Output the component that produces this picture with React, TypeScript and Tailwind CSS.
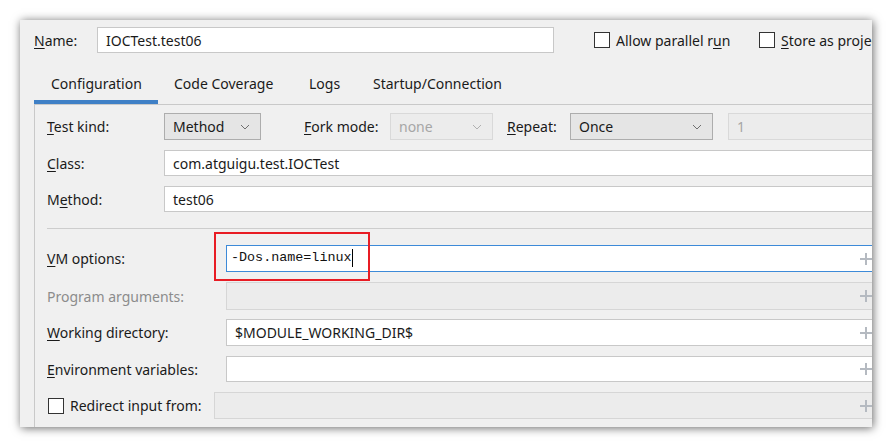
import type { ReactNode } from 'react';

const UI_FONT = "font-['Noto_Sans',sans-serif]";

function Chevron({ muted = false }: { muted?: boolean }) {
  return (
    <svg width="10" height="6" viewBox="0 0 10 6" className="shrink-0">
      <path d="M1 1l4 4 4-4" fill="none" stroke={muted ? '#b0b0b0' : '#6f6f6f'} strokeWidth="1" />
    </svg>
  );
}

function Plus() {
  return (
    <svg width="12" height="12" viewBox="0 0 12 12" className="shrink-0">
      <path d="M6 0v12M0 6h12" stroke="#b5bac1" strokeWidth="2" />
    </svg>
  );
}

function Checkbox() {
  return <span className="w-4 h-4 border border-[#333333] bg-white shrink-0" />;
}

function Label({ children, muted = false, width }: { children: ReactNode; muted?: boolean; width: string }) {
  return (
    <span className={`${width} shrink-0 ${muted ? 'text-[#8c8c8c]' : 'text-[#1a1a1a]'}`}>{children}</span>
  );
}

function Field({ value, disabled = false, expand = false, h = 'h-[26px]' }: { value?: string; disabled?: boolean; expand?: boolean; h?: string }) {
  return (
    <div
      className={`flex-1 ${h} flex items-center justify-between pl-[8px] pr-[4px] border ${
        disabled ? 'bg-[#ececec] border-[#d6d6d6]' : 'bg-white border-[#c8c8c8]'
      }`}
    >
      <span className="text-[#1a1a1a]">{value}</span>
      {expand && <Plus />}
    </div>
  );
}

function Combo({ value, width, disabled = false }: { value: string; width: string; disabled?: boolean }) {
  return (
    <div
      className={`${width} h-[27px] shrink-0 flex items-center justify-between pl-[8px] pr-[10px] border ${
        disabled ? 'bg-[#ececec] border-[#d9d9d9] text-[#a6a6a6]' : 'bg-[#e5e5e5] border-[#adadad] text-[#1a1a1a]'
      }`}
    >
      <span>{value}</span>
      <Chevron muted={disabled} />
    </div>
  );
}

const u = (c: string) => <u className="underline-offset-2">{c}</u>;

export default function App() {
  return (
    <div className={`w-[892px] h-[447px] bg-white pt-[20px] pl-[20px] ${UI_FONT} text-[14px]`}>
      <div className="w-[852px] h-[407px] bg-[#f0f0f0] overflow-hidden shadow-[1px_1px_9px_rgba(0,0,0,0.6)]">
        <div className="w-[857px] pl-[14px]">
          {/* name row */}
          <div className="flex items-center h-[26px] mt-[7px]">
            <Label width="w-[63px]">{u('N')}ame:</Label>
            <div className="w-[457px] shrink-0 h-[26px] flex items-center pl-[8px] bg-white border border-[#c8c8c8] text-[#1a1a1a]">
              IOCTest.test06
            </div>
            <div className="flex items-center gap-[6px] ml-[40px] w-[165px] shrink-0">
              <Checkbox />
              <span className="text-[#1a1a1a]">Allow parallel r{u('u')}n</span>
            </div>
            <div className="flex items-center gap-[6px] shrink-0">
              <Checkbox />
              <span className="text-[#1a1a1a] whitespace-nowrap">{u('S')}tore as project file</span>
            </div>
          </div>

          {/* tabs */}
          <div className="flex h-[37px] mt-[14px] text-[#1a1a1a]">
            <div className="w-[124px] flex flex-col">
              <span className="flex-1 flex items-center pl-[17px]">Configuration</span>
              <span className="h-[4px] bg-[#3f80c6]" />
            </div>
            <span className="w-[134px] flex items-center pl-[16px] pb-[4px]">Code Coverage</span>
            <span className="w-[64px] flex items-center pl-[17px] pb-[4px]">Logs</span>
            <span className="flex items-center pl-[17px] pb-[4px]">Startup/Connection</span>
          </div>

          {/* content */}
          <div className="border-t border-l border-[#c9c9c9] h-[330px] pl-[12px] flex flex-col">
            <div className="flex items-center h-[27px] mt-[8px]">
              <Label width="w-[117px]">{u('T')}est kind:</Label>
              <Combo value="Method" width="w-[97px]" />
              <span className="w-[43px]" />
              <Label width="w-[86px]">{u('F')}ork mode:</Label>
              <Combo value="none" width="w-[103px]" disabled />
              <span className="w-[14px]" />
              <Label width="w-[63px]">{u('R')}epeat:</Label>
              <Combo value="Once" width="w-[143px]" />
              <span className="w-[15px]" />
              <div className="flex-1 h-[27px] flex items-center pl-[8px] bg-[#ececec] border border-[#d9d9d9] text-[#a6a6a6]">1</div>
            </div>

            <div className="flex items-center h-[26px] mt-[10px]">
              <Label width="w-[117px]">{u('C')}lass:</Label>
              <Field value="com.atguigu.test.IOCTest" />
            </div>

            <div className="flex items-center h-[26px] mt-[10px]">
              <Label width="w-[117px]">M{u('e')}thod:</Label>
              <Field value="test06" />
            </div>

            <div className="h-px bg-[#cdcdcd] mt-[16px]" />

            <div className="relative flex items-center h-[27px] mt-[16px]">
              <Label width="w-[179px]">{u('V')}M options:</Label>
              <div className="flex-1 h-[27px] flex items-center justify-between pl-[4px] pr-[4px] bg-white border border-[#3d8ad8]">
                <span className="flex items-center font-['Liberation_Mono',monospace] text-[13.4px] text-[#111111]">
                  -Dos.name=linux
                  <span className="w-px h-[18px] bg-black" />
                </span>
                <Plus />
              </div>
              <span className="absolute left-[167px] top-[-13px] w-[156px] h-[49px] border-2 border-[#e81c24]" />
            </div>

            <div className="flex items-center h-[28px] mt-[10px]">
              <Label width="w-[179px]" muted>Program arguments:</Label>
              <Field disabled expand h="h-[28px]" />
            </div>

            <div className="flex items-center h-[27px] mt-[9px]">
              <Label width="w-[179px]">{u('W')}orking directory:</Label>
              <Field value="$MODULE_WORKING_DIR$" expand h="h-[27px]" />
            </div>

            <div className="flex items-center h-[26px] mt-[10px]">
              <Label width="w-[179px]">{u('E')}nvironment variables:</Label>
              <Field expand />
            </div>

            <div className="flex items-center h-[27px] mt-[10px]">
              <div className="w-[167px] shrink-0 flex items-center gap-[6px] pl-px">
                <Checkbox />
                <span className="text-[#1a1a1a]">Redirect input from:</span>
              </div>
              <Field disabled expand h="h-[27px]" />
            </div>
          </div>
        </div>
      </div>
    </div>
  );
}
